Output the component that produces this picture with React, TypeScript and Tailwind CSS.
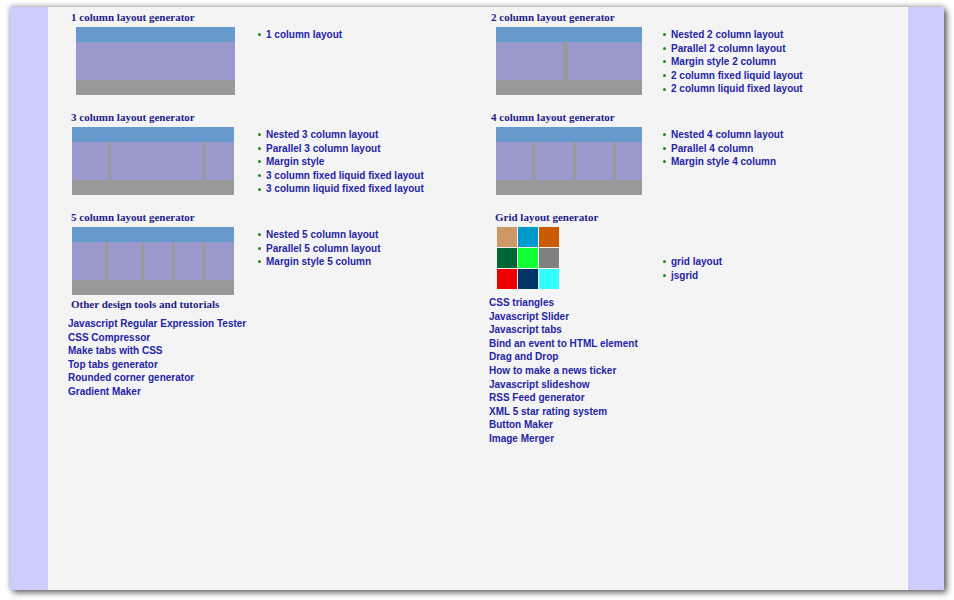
import React from 'react';

const HEAD = '#1c1c8a';
const LINK = '#2424a6';

type Cols = number[];

// mini layout preview: header band, body split into columns, footer band
function Preview({ width, cols }: { width: number; cols: Cols }) {
  return (
    <div className="flex flex-col" style={{ width }}>
      <div className="h-[15px] bg-[#6699cc]" />
      <div className="flex h-[38px] bg-[#999999] justify-between">
        {cols.map((w, i) => (
          <div key={i} className="h-full bg-[#9999cc]" style={{ width: w }} />
        ))}
      </div>
      <div className="h-[15px] bg-[#999999]" />
    </div>
  );
}

function Bullets({ items }: { items: string[] }) {
  return (
    <ul className="flex flex-col pt-[1px]">
      {items.map((t) => (
        <li key={t} className="flex items-center h-[13.6px]">
          <span className="w-[3px] h-[3px] rounded-full bg-[#1a8c1a] ml-[1px] mr-[5px]" />
          <a className="text-[10px] font-bold leading-[13.6px]" style={{ color: LINK }}>
            {t}
          </a>
        </li>
      ))}
    </ul>
  );
}

function Heading({ children, className = '' }: { children: React.ReactNode; className?: string }) {
  return (
    <h2
      className={`text-[11px] font-bold leading-[18px] h-[18px] ${className}`}
      style={{ color: HEAD, fontFamily: '"Liberation Serif", "Times New Roman", serif' }}
    >
      {children}
    </h2>
  );
}

function Block({
  title,
  preview,
  imgOffset,
  listLeft,
  items,
  className = '',
}: {
  title: string;
  preview: React.ReactNode;
  imgOffset: string;
  listLeft: string;
  items: string[];
  className?: string;
}) {
  return (
    <div className={className}>
      <Heading>{title}</Heading>
      <div className="flex mt-[1px]">
        <div className={`${listLeft} shrink-0`}>
          <div className={imgOffset}>{preview}</div>
        </div>
        <Bullets items={items} />
      </div>
    </div>
  );
}

function Links({ items, className = '' }: { items: string[]; className?: string }) {
  return (
    <div className={`flex flex-col ${className}`}>
      {items.map((t) => (
        <a key={t} className="text-[10px] font-bold leading-[13.6px] h-[13.6px] block" style={{ color: LINK }}>
          {t}
        </a>
      ))}
    </div>
  );
}

const gridColors = [
  '#cc9966', '#0099cc', '#cc5a00',
  '#006633', '#11ff33', '#808080',
  '#ee0000', '#003366', '#33ffff',
];

export default function App() {
  return (
    <div
      className="w-[954px] h-[600px] bg-white pt-[7px] pl-[10px] overflow-hidden"
      style={{ fontFamily: '"Liberation Sans", Arial, sans-serif' }}
    >
      <div className="flex w-[934px] h-[583px] shadow-[3px_3px_6px_rgba(0,0,0,0.55),0_-1px_5px_rgba(0,0,0,0.3)]">
        <div className="w-[38px] bg-[#ccccff]" />
        <div className="flex-1 bg-[#f4f4f4] border-r-2 border-[#fbfbfb] pl-[23px] pt-[1px] grid grid-cols-[420px_1fr] items-start">
          {/* left column */}
          <div className="flex flex-col">
            <Block
              title="1 column layout generator"
              preview={<Preview width={159} cols={[159]} />}
              imgOffset="ml-[5px]"
              listLeft="w-[186px]"
              items={['1 column layout']}
              className="h-[100px]"
            />
            <Block
              title="3 column layout generator"
              preview={<Preview width={162} cols={[36, 92, 28]} />}
              imgOffset="ml-[1px]"
              listLeft="w-[186px]"
              items={[
                'Nested 3 column layout',
                'Parallel 3 column layout',
                'Margin style',
                '3 column fixed liquid fixed layout',
                '3 column liquid fixed fixed layout',
              ]}
              className="h-[100px]"
            />
            <Block
              title="5 column layout generator"
              preview={<Preview width={162} cols={[33, 33, 28, 27, 29]} />}
              imgOffset="ml-[1px]"
              listLeft="w-[186px]"
              items={['Nested 5 column layout', 'Parallel 5 column layout', 'Margin style 5 column']}
            />
            <Heading>Other design tools and tutorials</Heading>
            <Links
              className="mt-[4px] -ml-[3px]"
              items={[
                'Javascript Regular Expression Tester',
                'CSS Compressor',
                'Make tabs with CSS',
                'Top tabs generator',
                'Rounded corner generator',
                'Gradient Maker',
              ]}
            />
          </div>

          {/* right column */}
          <div className="flex flex-col">
            <Block
              title="2 column layout generator"
              preview={<Preview width={146} cols={[67, 74]} />}
              imgOffset="ml-[5px]"
              listLeft="w-[171px]"
              items={[
                'Nested 2 column layout',
                'Parallel 2 column layout',
                'Margin style 2 column',
                '2 column fixed liquid layout',
                '2 column liquid fixed layout',
              ]}
              className="h-[100px]"
            />
            <Block
              title="4 column layout generator"
              preview={<Preview width={146} cols={[36, 38, 37, 26]} />}
              imgOffset="ml-[5px]"
              listLeft="w-[171px]"
              items={['Nested 4 column layout', 'Parallel 4 column', 'Margin style 4 column']}
              className="h-[100px]"
            />
            <div>
              <Heading className="ml-[4px]">Grid layout generator</Heading>
              <div className="flex mt-[1px] h-[68px]">
                <div className="w-[171px] shrink-0">
                  <div className="ml-[6px] grid grid-cols-[20px_20px_20px] gap-[1px] w-[62px]">
                    {gridColors.map((c) => (
                      <div key={c} className="h-[20px]" style={{ background: c }} />
                    ))}
                  </div>
                </div>
                <div className="mt-[27px]">
                  <Bullets items={['grid layout', 'jsgrid']} />
                </div>
              </div>
            </div>
            <Links
              className="mt-[1px] -ml-[2px]"
              items={[
                'CSS triangles',
                'Javascript Slider',
                'Javascript tabs',
                'Bind an event to HTML element',
                'Drag and Drop',
                'How to make a news ticker',
                'Javascript slideshow',
                'RSS Feed generator',
                'XML 5 star rating system',
                'Button Maker',
                'Image Merger',
              ]}
            />
          </div>
        </div>
        <div className="w-[36px] bg-[#ccccff]" />
      </div>
    </div>
  );
}
